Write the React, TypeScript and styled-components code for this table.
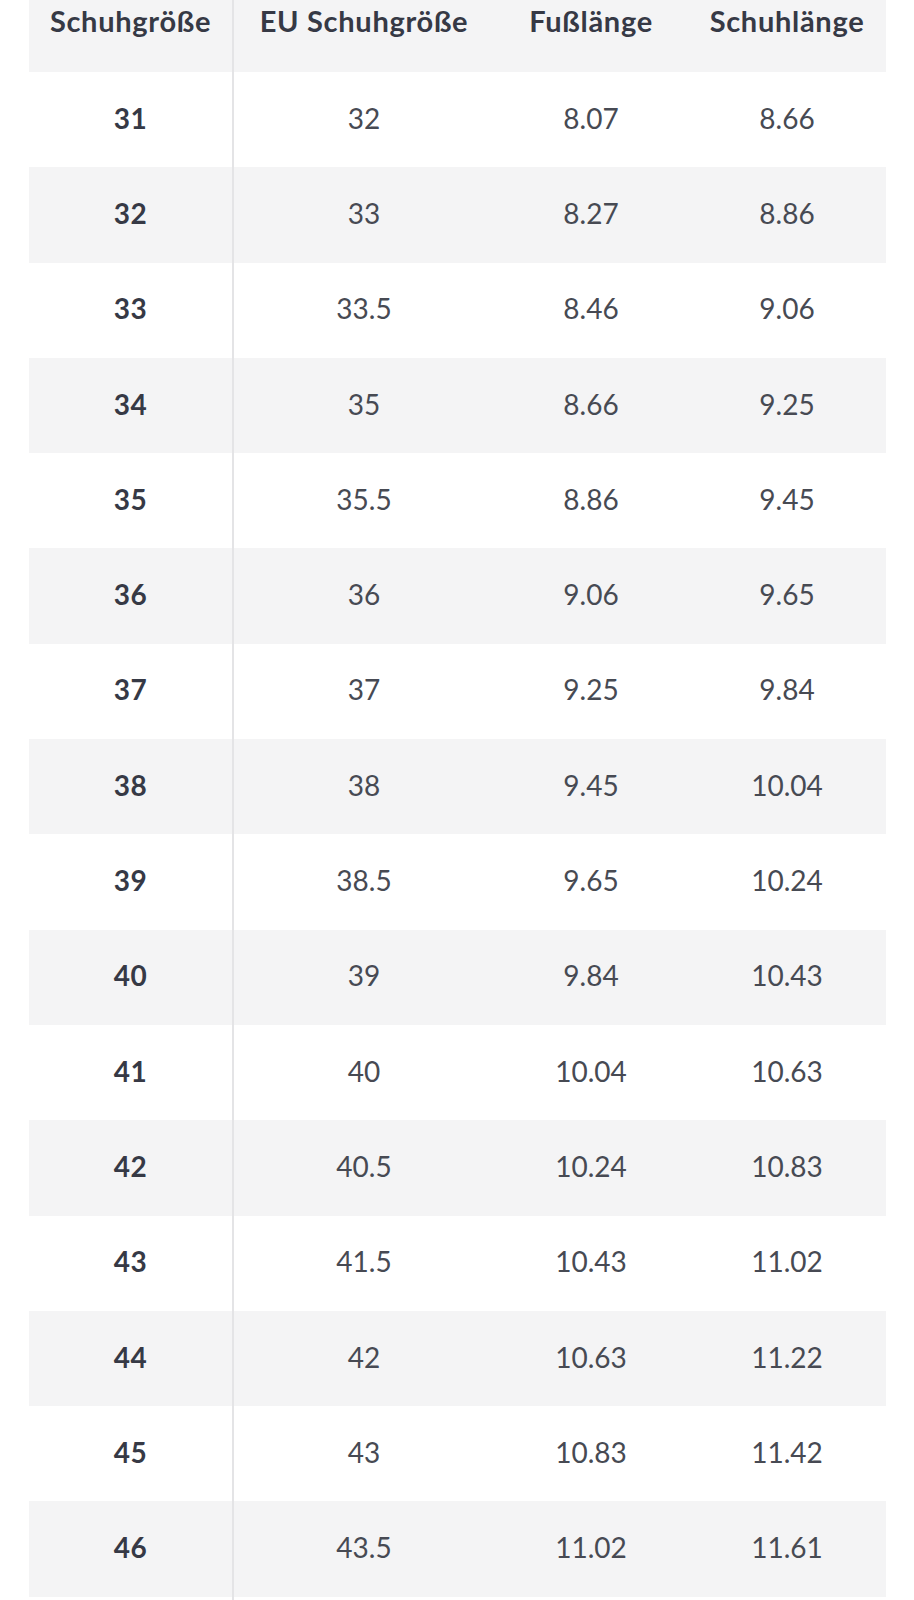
import styled, { createGlobalStyle } from "styled-components";

const GlobalStyle = createGlobalStyle`
  html, body {
    margin: 0;
    padding: 0;
    background: #ffffff;
  }
  body {
    font-family: Lato, "Open Sans", "Liberation Sans", sans-serif;
    color: #3b3e4a;
  }
`;

const Page = styled.div`
  padding: 0 28px 0 29px;
  width: 914px;
  box-sizing: border-box;
`;

const Table = styled.div`
  display: grid;
  grid-template-columns: 205px 260px 194px 1fr;
`;

const Row = styled.div<{ $shade: boolean }>`
  display: contents;
  & > div {
    background: ${(p) => (p.$shade ? "#f4f4f5" : "#ffffff")};
  }
`;

const HeadCell = styled.div<{ $first?: boolean }>`
  height: 72px;
  box-sizing: border-box;
  padding-top: 4px;
  text-align: center;
  font-size: 29px;
  line-height: 34px;
  font-weight: 700;
  letter-spacing: 0.7px;
  color: #363945;
  white-space: nowrap;
  border-right: ${(p) => (p.$first ? "2px solid #e4e4e6" : "none")};
`;

const Cell = styled.div<{ $first?: boolean }>`
  height: 95.3px;
  box-sizing: border-box;
  padding-bottom: 4px;
  display: flex;
  align-items: center;
  justify-content: center;
  font-size: 28px;
  font-weight: ${(p) => (p.$first ? 700 : 400)};
  letter-spacing: ${(p) => (p.$first ? "0.4px" : "0")};
  color: ${(p) => (p.$first ? "#363945" : "#474a53")};
  border-right: ${(p) => (p.$first ? "2px solid #e4e4e6" : "none")};
`;

const Tail = styled.div`
  width: 205px;
  height: 20px;
  box-sizing: border-box;
  border-right: 2px solid #e4e4e6;
`;

const headers = ["Schuhgröße", "EU Schuhgröße", "Fußlänge", "Schuhlänge"];

const rows: string[][] = [
  ["31", "32", "8.07", "8.66"],
  ["32", "33", "8.27", "8.86"],
  ["33", "33.5", "8.46", "9.06"],
  ["34", "35", "8.66", "9.25"],
  ["35", "35.5", "8.86", "9.45"],
  ["36", "36", "9.06", "9.65"],
  ["37", "37", "9.25", "9.84"],
  ["38", "38", "9.45", "10.04"],
  ["39", "38.5", "9.65", "10.24"],
  ["40", "39", "9.84", "10.43"],
  ["41", "40", "10.04", "10.63"],
  ["42", "40.5", "10.24", "10.83"],
  ["43", "41.5", "10.43", "11.02"],
  ["44", "42", "10.63", "11.22"],
  ["45", "43", "10.83", "11.42"],
  ["46", "43.5", "11.02", "11.61"],
];

export default function App() {
  return (
    <>
      <GlobalStyle />
      <Page>
        <Table>
          <Row $shade={true}>
            {headers.map((h, i) => (
              <HeadCell key={h} $first={i === 0}>
                {h}
              </HeadCell>
            ))}
          </Row>
          {rows.map((r, ri) => (
            <Row key={r[0]} $shade={ri % 2 === 1}>
              {r.map((v, ci) => (
                <Cell key={ci} $first={ci === 0}>
                  {v}
                </Cell>
              ))}
            </Row>
          ))}
        </Table>
        <Tail />
      </Page>
    </>
  );
}
